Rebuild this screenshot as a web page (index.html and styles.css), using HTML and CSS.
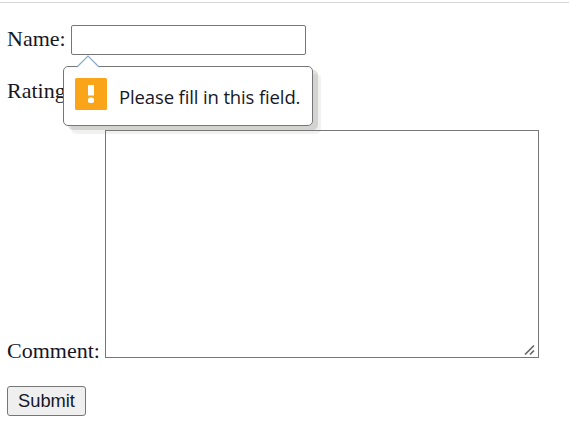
FILE: index.html
```html
<!DOCTYPE html>
<html lang="en">
<head>
<meta charset="utf-8">
<title>Feedback form</title>
<link rel="stylesheet" href="styles.css">
</head>
<body>
<form class="form" novalidate>
  <div class="row row-name">
    <label for="name">Name:</label>
    <input class="name" id="name" type="text">
    <div class="bubble" role="alert">
      <svg class="arrow" width="24" height="13" viewBox="0 0 24 13"><path d="M1 12 L12 1 L23 12 V13 H1Z" fill="#fff"/><path d="M1 12 L12 1 L23 12" fill="none" stroke="#86aac8" stroke-width="1.2"/></svg>
      <svg class="warn" width="32" height="32" viewBox="0 0 32 32"><rect width="32" height="32" rx="1.5" fill="#faa41a"/><path d="M13 7h6v10.500h-6zM14.500 19.500h3l1.500 1.500v3l-1.500 1h-3l-1.500-1v-3z" fill="#fff"/></svg>
      <span class="message">Please fill in this field.</span>
    </div>
  </div>
  <div class="row row-rating"><span>Rating</span></div>
  <div class="row row-comment">
    <label for="comment">Comment:</label>
    <div class="area">
      <textarea class="comment" id="comment"></textarea>
      <svg class="grip" width="12" height="12" viewBox="0 0 12 12"><path d="M1 10.500 L10 1.500 M6 10.500 L10 6.500" stroke="#666" stroke-width="1.7" fill="none"/></svg>
    </div>
  </div>
  <button class="submit" type="button">Submit</button>
</form>
</body>
</html>
```
FILE: styles.css
```css
* { box-sizing: border-box; }
html { background: #fff; overflow: hidden; }
body {
  margin: 2px 0 0;
  border-top: 1px solid #d6d6d6;
  font: 22px/26px "Liberation Serif", "Times New Roman", serif;
  color: #17171f;
}
.form { padding: 22px 0 0 7px; }
.row { display: flex; }
.row-name { position: relative; height: 30px; align-items: center; }
.row-name label { width: 64px; padding-bottom: 2px; }
.name {
  width: 235px;
  height: 30px;
  border: 1px solid #767676;
  border-radius: 2px;
  outline: none;
}
.row-rating { margin-top: 23px; height: 26px; }
.row-comment { margin-top: 26px; height: 228px; align-items: flex-end; }
.row-comment label { width: 98px; margin-bottom: -6px; }
.area { position: relative; width: 434px; height: 228px; }
.comment {
  display: block;
  width: 100%;
  height: 100%;
  border: 1px solid #767676;
  background: transparent;
  resize: none;
  outline: none;
}
.grip { position: absolute; right: 3px; bottom: 2px; }
.submit {
  display: block;
  width: 79px;
  height: 30px;
  margin-top: 28px;
  padding: 0;
  border: 1px solid #767676;
  border-radius: 3px;
  background: #efefef;
  color: #17171f;
  font: 18.300px "Liberation Sans", Arial, sans-serif;
}
.bubble {
  position: absolute;
  left: 56px;
  top: 41px;
  display: flex;
  align-items: center;
  gap: 12px;
  width: 250px;
  height: 60px;
  padding: 0 0 4px 11px;
  border: 1px solid #767676;
  border-radius: 5px;
  background: #fff;
  box-shadow: 5px 4px 0 rgba(70, 80, 60, .17), 8px 8px 1px rgba(0, 0, 0, .06);
}
.arrow { position: absolute; left: 12px; top: -12px; }
.message {
  padding-top: 6px;
  white-space: nowrap;
  font: 18.500px/24px "Open Sans", "Noto Sans", sans-serif;
  letter-spacing: -.13px;
}
```
